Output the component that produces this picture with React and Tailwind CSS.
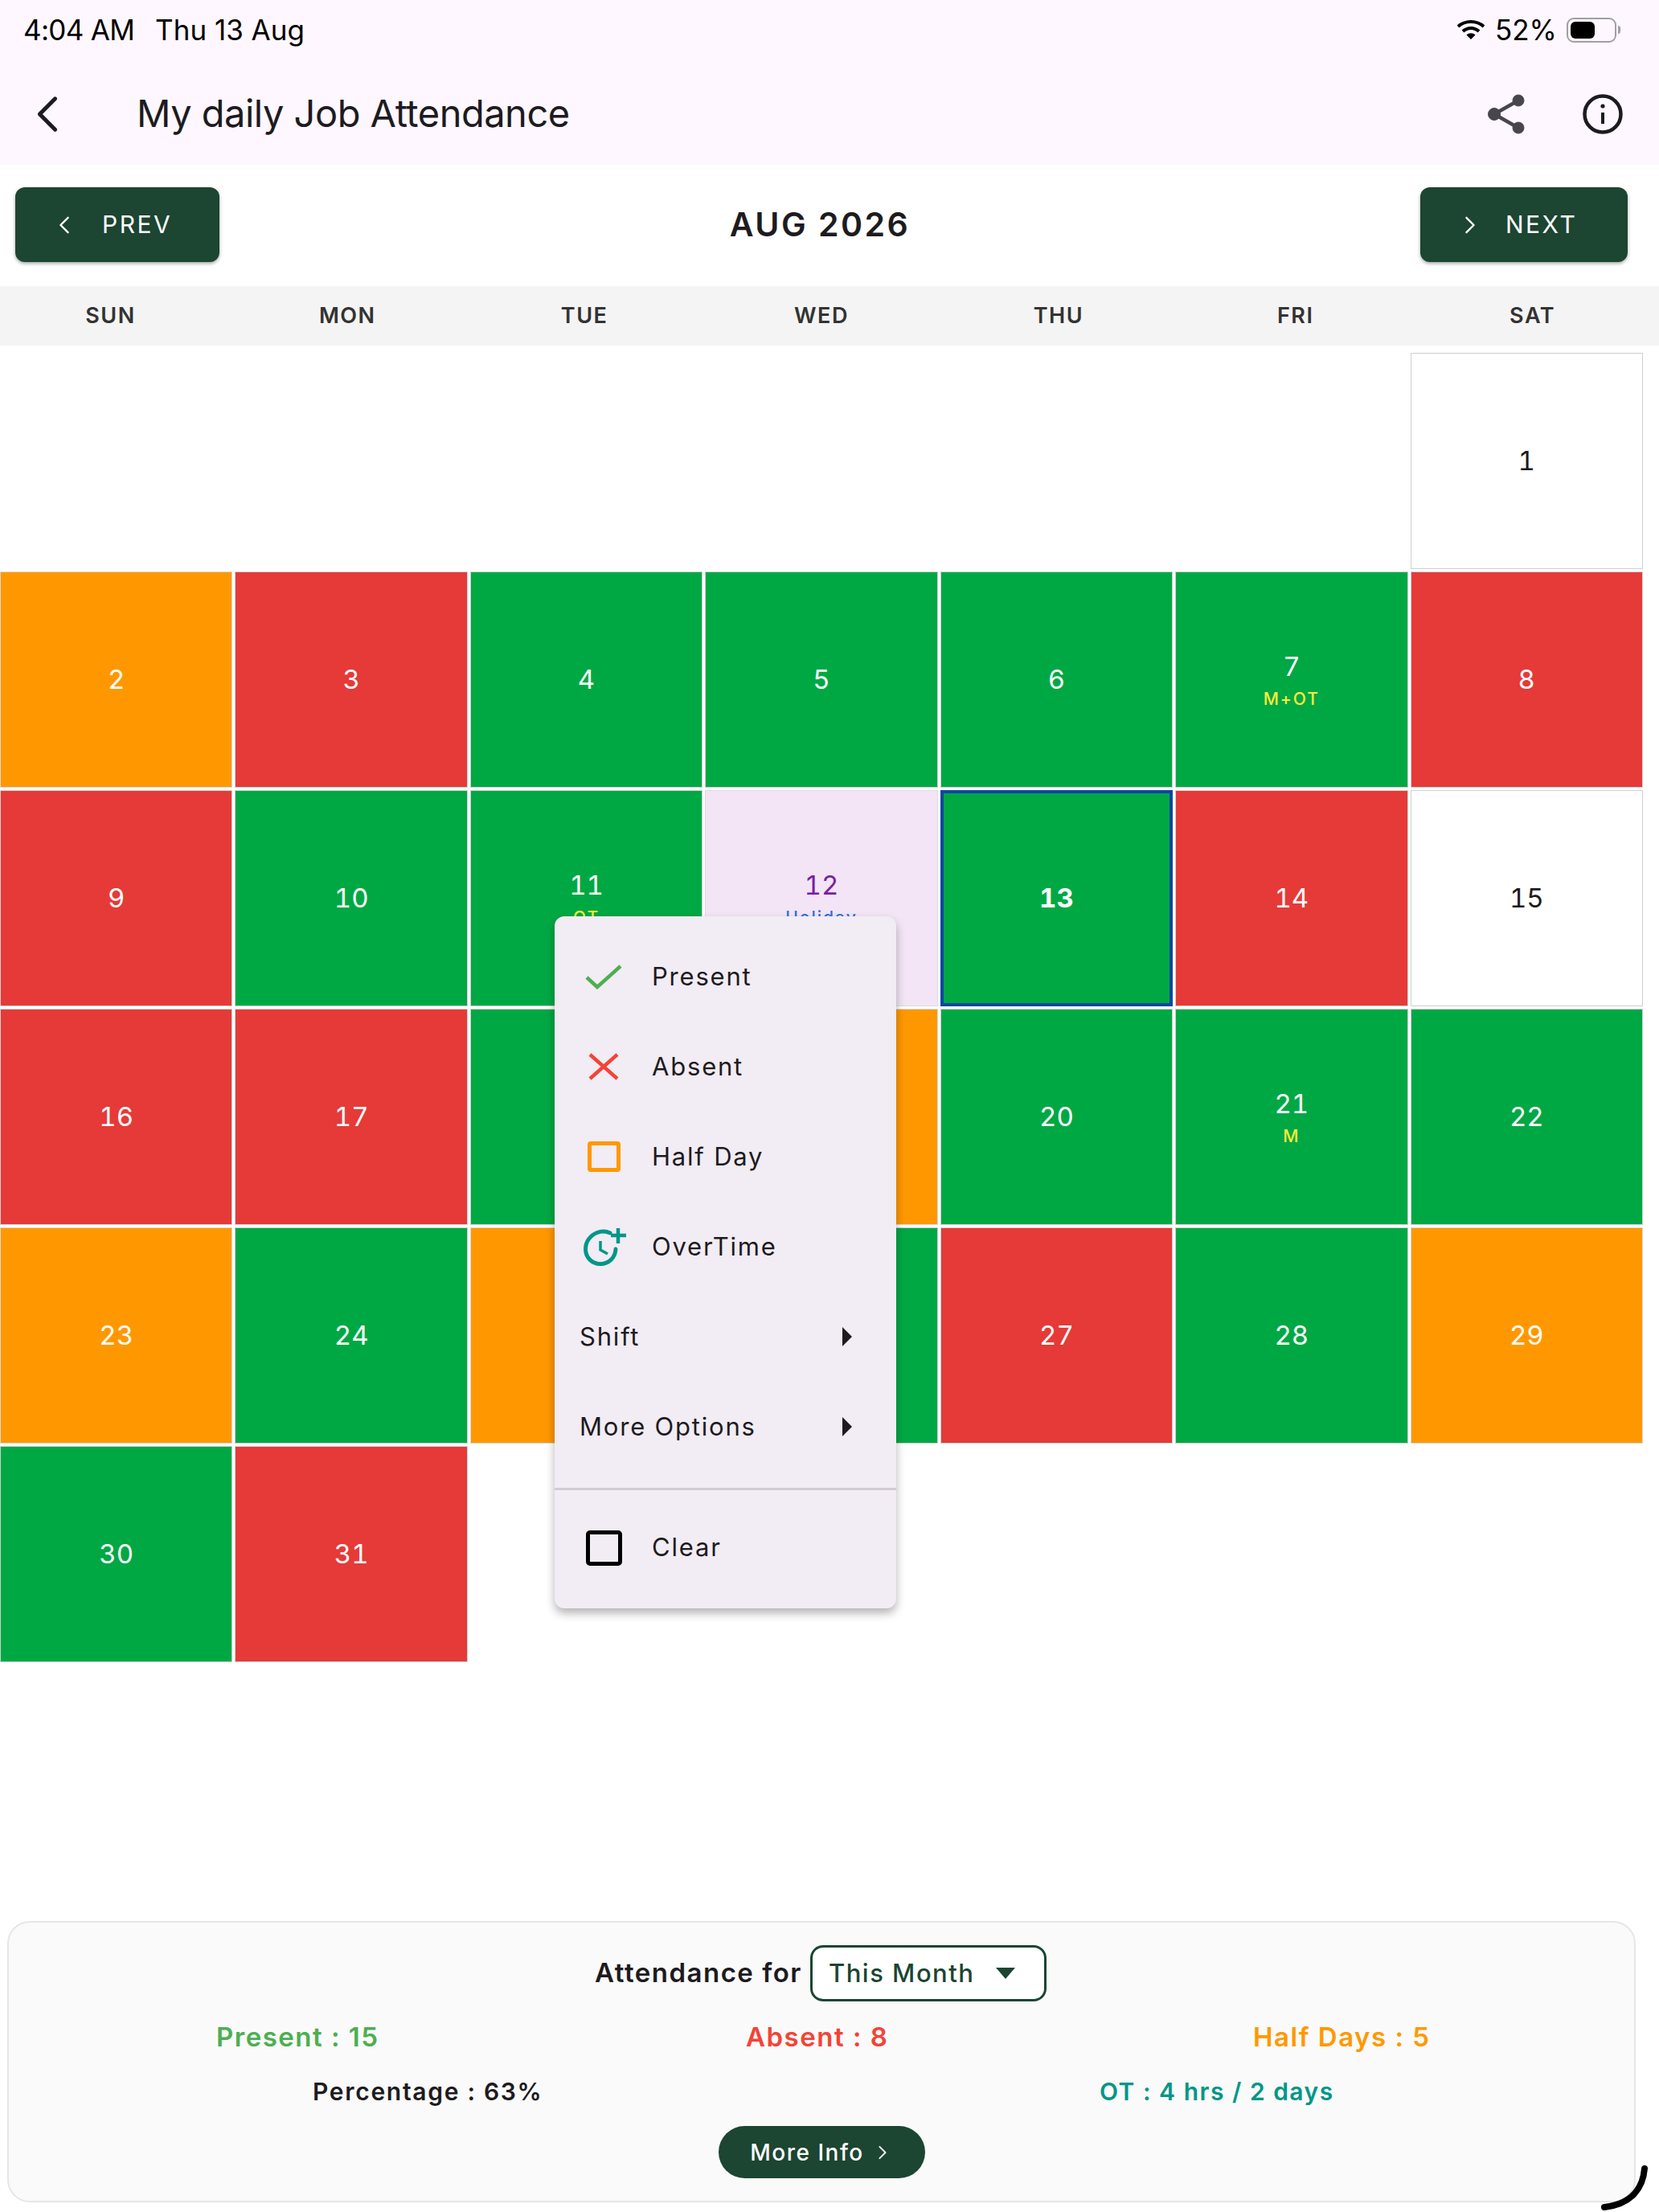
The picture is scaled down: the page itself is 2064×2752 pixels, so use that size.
import React from 'react';

const GREEN = 'bg-[#00a844] text-white border-[#cfcfcf]';
const RED = 'bg-[#e53a37] text-white border-[#d4d4d4]';
const ORANGE = 'bg-[#ff9800] text-white border-[#d9d9d9]';
const WHITE = 'bg-white text-[#1d1b20] border-[#d0d0d0]';
const HOLIDAY = 'bg-[#f3e5f5] text-[#7b1fa2] border-[#dcdcdc]';

const days = [
  { day: 1, style: WHITE },
  { day: 2, style: ORANGE },
  { day: 3, style: RED },
  { day: 4, style: GREEN },
  { day: 5, style: GREEN },
  { day: 6, style: GREEN },
  { day: 7, style: GREEN, note: 'M+OT' },
  { day: 8, style: RED },
  { day: 9, style: RED },
  { day: 10, style: GREEN },
  { day: 11, style: GREEN, note: 'OT' },
  { day: 12, style: HOLIDAY, note: 'Holiday', noteClass: 'text-[#2f6fde]' },
  { day: 13, style: 'bg-[#00a844] text-white font-bold border-[4px] border-[#0d47a1]' },
  { day: 14, style: RED },
  { day: 15, style: WHITE },
  { day: 16, style: RED },
  { day: 17, style: RED },
  { day: 18, style: GREEN },
  { day: 19, style: ORANGE },
  { day: 20, style: GREEN },
  { day: 21, style: GREEN, note: 'M' },
  { day: 22, style: GREEN },
  { day: 23, style: ORANGE },
  { day: 24, style: GREEN },
  { day: 25, style: ORANGE },
  { day: 26, style: GREEN },
  { day: 27, style: RED },
  { day: 28, style: GREEN },
  { day: 29, style: ORANGE },
  { day: 30, style: GREEN },
  { day: 31, style: RED },
];

const weekdays = ['SUN', 'MON', 'TUE', 'WED', 'THU', 'FRI', 'SAT'];

const Chevron = ({ dir, className }) => (
  <svg viewBox="0 0 14 24" className={className} fill="none" stroke="currentColor" strokeWidth="2.6" strokeLinecap="round" strokeLinejoin="round">
    <path d={dir === 'left' ? 'M12 2 L2 12 L12 22' : 'M2 2 L12 12 L2 22'} />
  </svg>
);

const Wifi = () => (
  <svg viewBox="0 0 36 26" className="w-[36px] h-[26px]" fill="none" stroke="#000" strokeWidth="4">
    <path d="M2 9 C11 1 25 1 34 9" />
    <path d="M8 15 C14 9.5 22 9.5 28 15" />
    <path d="M18 25 L12.5 19.5 C15.5 16.5 20.5 16.5 23.5 19.5 Z" fill="#000" stroke="none" />
  </svg>
);

const Share = () => (
  <svg viewBox="0 0 48 50" className="w-[48px] h-[50px]" fill="#49454f" stroke="#49454f">
    <path d="M39 8 L9 25 L39 42" fill="none" strokeWidth="4.5" />
    <circle cx="39" cy="8" r="7" />
    <circle cx="9" cy="25" r="7.5" />
    <circle cx="39" cy="42" r="7" />
  </svg>
);

const Info = () => (
  <svg viewBox="0 0 50 50" className="w-[50px] h-[50px]" fill="none" stroke="#1d1b20" strokeWidth="4.5">
    <circle cx="25" cy="25" r="22.5" />
    <path d="M25 23 V37" strokeWidth="4" />
    <circle cx="25" cy="15" r="2.6" fill="#1d1b20" stroke="none" />
  </svg>
);

const OvertimeIcon = () => (
  <svg viewBox="0 0 54 48" className="w-[54px] h-[48px]" fill="none" stroke="#009688" strokeWidth="5">
    <path d="M33 7 C28 4.5 22 4.5 17 6.500 C8 10 2.500 18 2.500 27 C2.500 38 11 45.500 21 45.500 C31 45.500 39.500 38 40 27" strokeLinecap="round" />
    <path d="M21 17 V28 L30 33" strokeWidth="3.5" />
    <path d="M43 1 V20 M34 10 H53" strokeWidth="4.5" />
  </svg>
);

const SubmenuArrow = () => (
  <svg viewBox="0 0 14 24" className="w-[14px] h-[24px]" fill="#1d1b20">
    <path d="M1 0 L13 12 L1 24 Z" />
  </svg>
);

const DayCell = ({ item, className }) => (
  <div className={`h-[269px] pb-[2px] border flex flex-col items-center justify-center ${item.style} ${className || ''}`}>
    <span className="text-[33px] leading-[42px] tabular-nums">{item.day}</span>
    {item.note && (
      <span className={`mt-[8px] text-[21px] leading-[24px] font-medium tracking-[2px] ${item.noteClass || 'text-[#ffeb3b]'}`}>{item.note}</span>
    )}
  </div>
);

const MenuRow = ({ icon, label }) => (
  <div className="h-[112px] flex items-center">
    <div className="w-[121px] flex justify-center pl-[1px]">{icon}</div>
    <span>{label}</span>
  </div>
);

const SubmenuRow = ({ label }) => (
  <div className="h-[112px] flex items-center justify-between pl-[31px] pr-[54px]">
    <span>{label}</span>
    <SubmenuArrow />
  </div>
);

const App = () => {
  return (
    <div className="relative w-[2064px] h-[2752px] overflow-hidden bg-white flex flex-col font-['Inter',sans-serif] text-[#1d1b20]">
      <header className="h-[205px] bg-[#fef7ff]">
        <div className="h-[74px] pl-[29px] pr-[48px] flex items-center justify-between text-[35px] text-black">
          <div className="flex gap-[26px]">
            <span className="tracking-[-0.7px]">4:04 AM</span>
            <span>Thu 13 Aug</span>
          </div>
          <div className="flex items-center gap-[12px]">
            <Wifi />
            <span>52%</span>
            <div className="flex items-center gap-[2px]">
              <div className="w-[62px] h-[31px] rounded-[9px] border-2 border-[#a0a0a4] p-[3px]">
                <div className="w-[30px] h-full rounded-[6px] bg-black" />
              </div>
              <div className="w-[3px] h-[10px] rounded-r-full bg-[#a0a0a4]" />
            </div>
          </div>
        </div>
        <div className="h-[131px] pt-[4px] flex items-center">
          <Chevron dir="left" className="ml-[45px] w-[28px] h-[46px] text-[#1d1b20]" />
          <h1 className="ml-[97px] text-[47px] font-normal tracking-[-0.5px]">My daily Job Attendance</h1>
          <div className="ml-auto mr-[45px] flex items-center gap-[71px]">
            <Share />
            <Info />
          </div>
        </div>
      </header>

      <div className="h-[151px] pb-[2px] pl-[19px] pr-[39px] flex items-center justify-between">
        <button className="w-[254px] h-[93px] rounded-[12px] bg-[#1c4532] text-white shadow-[0_2px_4px_rgba(0,0,0,0.35)] flex items-center pl-[54px] gap-[40px] text-[30px] tracking-[2.5px]">
          <Chevron dir="left" className="w-[14px] h-[22px]" />
          PREV
        </button>
        <div className="text-[41px] font-semibold tracking-[2.5px]">AUG 2026</div>
        <button className="w-[258px] h-[93px] rounded-[12px] bg-[#1c4532] text-white shadow-[0_2px_4px_rgba(0,0,0,0.35)] flex items-center pl-[55px] gap-[37px] text-[30px] tracking-[2.5px]">
          <Chevron dir="right" className="w-[14px] h-[22px]" />
          NEXT
        </button>
      </div>

      <div className="h-[74px] bg-[#f4f4f4] grid grid-cols-7 items-center">
        {weekdays.map((name) => (
          <div key={name} className="pr-5 text-center text-[27px] font-semibold tracking-[1.5px] text-[#333]">{name}</div>
        ))}
      </div>

      <div className="mt-[9px] w-[2044px] grid grid-cols-7 gap-[3px]">
        {days.map((item) => (
          <DayCell key={item.day} item={item} className={item.day === 1 ? 'col-start-7' : ''} />
        ))}
      </div>

      <section className="mt-auto mb-[12px] mx-[9px] w-[2026px] h-[350px] rounded-[28px] border-2 border-[#e6e6e6] bg-[#fafafa] pt-[28px]">
        <div className="flex items-center justify-center gap-[10px] pr-[2px] text-[33px] font-semibold tracking-[1.5px]">
          <span>Attendance for</span>
          <div className="w-[294px] h-[70px] rounded-[16px] border-[3px] border-[#1c4532] bg-white flex items-center pl-[20px] text-[#1c4532] text-[31px] font-medium">
            <span>This Month</span>
            <svg viewBox="0 0 24 14" className="ml-[25px] w-[26px] h-[14px]" fill="#1c4532">
              <path d="M0 0 H24 L12 14 Z" />
            </svg>
          </div>
        </div>
        <div className="mt-[20px] h-[50px] grid grid-cols-[1fr_1fr_1fr] items-center text-[33px] font-semibold tracking-[1.5px]">
          <span className="text-[#4caf50] pl-[258px]">Present : 15</span>
          <span className="text-[#f44336] pl-[243px]">Absent : 8</span>
          <span className="text-[#ff9800] pl-[200px]">Half Days : 5</span>
        </div>
        <div className="mt-[17px] h-[50px] grid grid-cols-2 items-center text-[30px] font-semibold tracking-[1.7px]">
          <span className="pl-[378px]">Percentage : 63%</span>
          <span className="text-[#009688] pl-[346px] tracking-[1.5px]">OT : 4 hrs / 2 days</span>
        </div>
        <div className="mt-[18px] flex justify-center">
          <button className="w-[257px] h-[65px] pr-[8px] rounded-full bg-[#1c4532] text-white flex items-center justify-center gap-[18px] text-[28px] font-medium tracking-[1.5px]">
            More Info
            <Chevron dir="right" className="w-[10px] h-[20px]" />
          </button>
        </div>
      </section>

      {/* popup menu sits over the calendar */}
      <div className="absolute left-[690px] top-[1140px] w-[425px] h-[861px] rounded-[12px] bg-[#f2ecf4] shadow-[0_6px_12px_rgba(0,0,0,0.3)] pt-[19px] text-[31px] tracking-[1.8px] text-[#1d1b20]">
        <MenuRow
          label="Present"
          icon={
            <svg viewBox="0 0 46 32" className="w-[46px] h-[32px]" fill="none" stroke="#4caf50" strokeWidth="4.5">
              <path d="M2 17 L15 29 L44 3" />
            </svg>
          }
        />
        <MenuRow
          label="Absent"
          icon={
            <svg viewBox="0 0 38 34" className="w-[38px] h-[34px]" fill="none" stroke="#f44336" strokeWidth="4.5">
              <path d="M2 2 L36 32 M36 2 L2 32" />
            </svg>
          }
        />
        <MenuRow label="Half Day" icon={<div className="w-[41px] h-[38px] rounded-[4px] border-[5px] border-[#ff9800]" />} />
        <MenuRow label="OverTime" icon={<div className="pl-[3px]"><OvertimeIcon /></div>} />
        <SubmenuRow label="Shift" />
        <SubmenuRow label="More Options" />
        <div className="mt-[20px] h-[3px] bg-[#d3ccd6]" />
        <div className="h-[146px] flex items-center pb-[3px]">
          <div className="w-[121px] flex justify-center pl-[1px]">
            <div className="w-[45px] h-[44px] rounded-[5px] border-[5px] border-black" />
          </div>
          <span>Clear</span>
        </div>
      </div>

      {/* stray corner arc from the device photo */}
      <svg viewBox="0 0 64 60" className="absolute left-[1988px] top-[2692px] w-[64px] h-[60px]" fill="none" stroke="#000" strokeWidth="8" strokeLinecap="round">
        <path d="M58 6 C56 30 42 50 8 54" />
      </svg>
    </div>
  );
};

export default App;
